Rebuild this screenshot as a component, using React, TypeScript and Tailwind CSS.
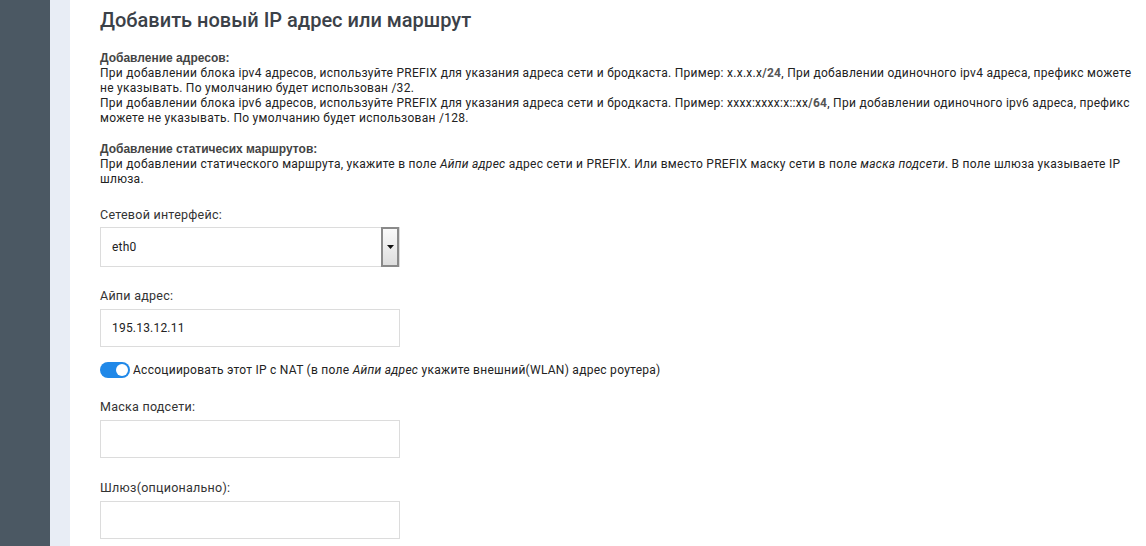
import React from "react";

const body = "font-['Roboto','Liberation_Sans',sans-serif]";

function Field({ label, value, className }: { label: string; value?: string; className?: string }) {
  return (
    <div className={className}>
      <div className="text-[12.5px] leading-[15px] tracking-[0.25px] text-[#333]">{label}</div>
      <div className="mt-[6px] flex h-[38px] w-[300px] items-center border border-[#dcdcdc] bg-white px-[11px] text-[12px] tracking-[0.2px] text-[#222]">
        {value}
      </div>
    </div>
  );
}

export default function App() {
  return (
    <div className={`flex h-[546px] w-[1146px] overflow-hidden bg-white ${body}`}>
      <div className="w-[50px] flex-none bg-[#4b5863]" />
      <div className="w-[20px] flex-none bg-[#e8edf5]" />
      <div className="flex-none pl-[30px] pt-[6px]">
        <h1 className="text-[20px] leading-[28px] font-medium text-[#3b4148]">
          Добавить новый IP адрес или маршрут
        </h1>

        <div className="mt-[17px] w-[1036px] text-[12px] leading-[15px] tracking-[0.27px] text-[#222]">
          <div className="font-['Liberation_Sans',sans-serif] text-[12px] font-bold tracking-normal text-[#444]">
            Добавление адресов:
          </div>
          <div>
            При добавлении блока ipv4 адресов, используйте PREFIX для указания адреса сети и бродкаста. Пример: x.x.x.x
            <b className="text-[#555]">/24</b>, При добавлении одиночного ipv4 адреса, префикс можете не указывать. По
            умолчанию будет использован /32.
          </div>
          <div>
            При добавлении блока ipv6 адресов, используйте PREFIX для указания адреса сети и бродкаста. Пример:
            xxxx:xxxx:x::xx<b className="text-[#555]">/64</b>, При добавлении одиночного ipv6 адреса, префикс можете не
            указывать. По умолчанию будет использован /128.
          </div>

          <div className="mt-[16px] font-['Liberation_Sans',sans-serif] text-[12px] font-bold tracking-normal text-[#444]">
            Добавление статичесих маршрутов:
          </div>
          <div>
            При добавлении статического маршрута, укажите в поле <i>Айпи адрес</i> адрес сети и PREFIX. Или вместо
            PREFIX маску сети в поле <i>маска подсети</i>. В поле шлюза указываете IP шлюза.
          </div>
        </div>

        <div className="mt-[20px]">
          <div className="text-[12.5px] leading-[15px] tracking-[0.25px] text-[#333]">Сетевой интерфейс:</div>
          <div className="mt-[5px] flex h-[40px] w-[300px] items-stretch border border-[#dcdcdc] bg-white">
            <div className="flex flex-1 items-center px-[11px] text-[12px] tracking-[0.2px] text-[#222]">eth0</div>
            <div className="my-[-1px] flex w-[18px] items-center justify-center border-2 border-[#8a8a8a] bg-gradient-to-b from-[#fafafa] to-[#dedede]">
              <svg width="7" height="4" viewBox="0 0 7 4">
                <path d="M0 0h7L3.5 4z" fill="#111" />
              </svg>
            </div>
          </div>
        </div>

        <Field className="mt-[21px]" label="Айпи адрес:" value="195.13.12.11" />

        <div className="mt-[15px] flex items-center text-[12px] leading-[16px] tracking-[0.27px] text-[#222]">
          <div className="flex h-[16px] w-[30px] items-center justify-end rounded-full bg-[#2088e8] pr-[2px]">
            <div className="h-[12px] w-[12px] rounded-full bg-white" />
          </div>
          <span className="ml-[3px]">
            Ассоциировать этот IP с NAT (в поле <i>Айпи адрес</i> укажите внешний(WLAN) адрес роутера)
          </span>
        </div>

        <Field className="mt-[21px]" label="Маска подсети:" />
        <Field className="mt-[22px]" label="Шлюз(опционально):" />
      </div>
    </div>
  );
}
